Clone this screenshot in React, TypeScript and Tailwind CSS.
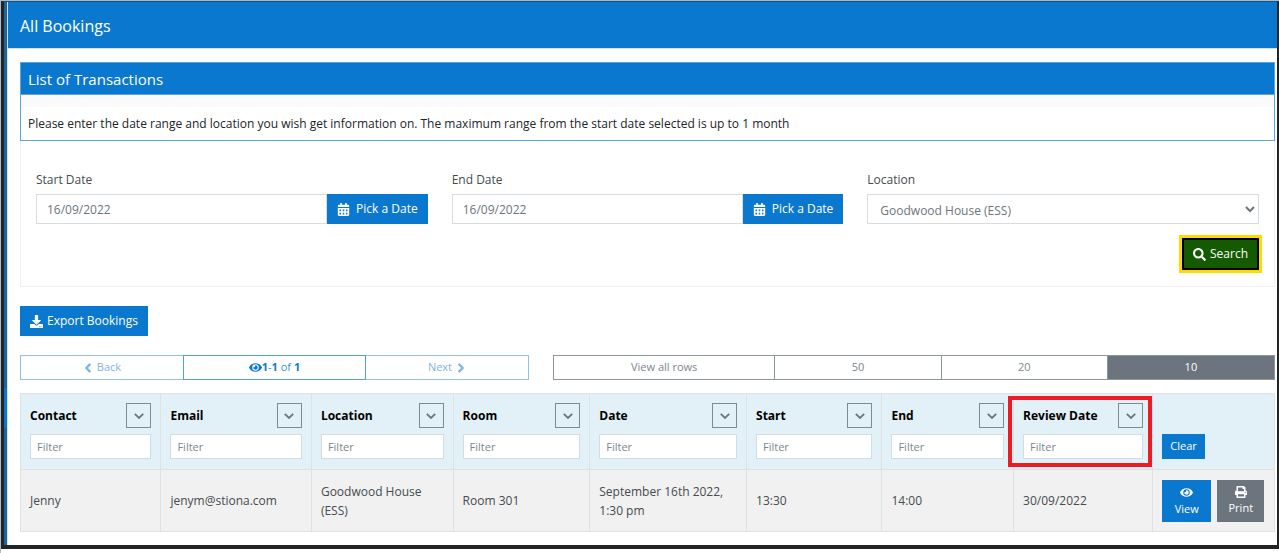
import { useState } from 'react';
import { FaCalendarAlt, FaChevronLeft, FaChevronRight, FaDownload, FaEye, FaPrint, FaSearch } from 'react-icons/fa';

const columns = [
    { key: 'contact', label: 'Contact', width: 'w-[11.2%]' },
    { key: 'email', label: 'Email', width: 'w-[12%]' },
    { key: 'location', label: 'Location', width: 'w-[11.3%]' },
    { key: 'room', label: 'Room', width: 'w-[10.9%]' },
    { key: 'date', label: 'Date', width: 'w-[12.5%]' },
    { key: 'start', label: 'Start', width: 'w-[10.8%]' },
    { key: 'end', label: 'End', width: 'w-[10.5%]' },
    { key: 'review', label: 'Review Date', width: 'w-[11.1%]' },
] as const;

const booking = {
    contact: 'Jenny',
    email: 'jenym@stiona.com',
    location: 'Goodwood House (ESS)',
    room: 'Room 301',
    date: 'September 16th 2022, 1:30 pm',
    start: '13:30',
    end: '14:00',
    review: '30/09/2022',
};

function DateField({ id, label }: { id: string; label: string }) {
    const [value, setValue] = useState('16/09/2022');

    return (
        <div>
            <label htmlFor={id} className="block text-xs leading-5">{label}</label>
            <div className="mt-1 flex h-[30px]">
                <input
                    id={id}
                    value={value}
                    onChange={(e) => setValue(e.target.value)}
                    className="min-w-0 flex-1 border border-[#d9dde2] px-2.5 pt-0.5 text-xs text-[#6c757d]"
                />
                <button className="flex items-center gap-1.5 bg-[#0b78d0] px-2.5 text-xs text-white">
                    <FaCalendarAlt className="h-[13px] w-auto" />
                    Pick a Date
                </button>
            </div>
        </div>
    );
}

function SortButton({ label }: { label: string }) {
    return (
        <button aria-label={`Sort by ${label}`} className="flex size-[25px] items-center justify-center border border-[#7f8b93] text-[#6c757d]">
            <svg viewBox="0 0 10 6" className="h-1.5 w-2.5" fill="none" stroke="currentColor" strokeWidth="1.8">
                <path d="M0.8 0.8 L5 5 L9.2 0.8" />
            </svg>
        </button>
    );
}

function BookingsTable() {
    return (
        <table className="mt-[13px] w-full table-fixed border-collapse text-left">
            <thead>
                <tr className="bg-[#e2f0f7]">
                    {columns.map((col) => (
                        <th key={col.key} className={`relative border border-[#dee2e6] px-[9px] pt-[9px] pb-2.5 text-xs font-bold text-black ${col.width}`}>
                            <div className="flex items-center justify-between">
                                {col.label}
                                <SortButton label={col.label} />
                            </div>
                            <input
                                aria-label={`Filter ${col.label}`}
                                placeholder="Filter"
                                className="mt-1.5 block h-[25px] w-full border border-[#d5dce1] bg-white px-1.5 text-[11px] font-normal placeholder:text-[#7d868e]"
                            />
                            {/* Highlight round the review date filter */}
                            {col.key === 'review' && (
                                <div className="pointer-events-none absolute -left-1.5 right-0 top-0.5 bottom-0.5 border-4 border-[#ed1c24]" />
                            )}
                        </th>
                    ))}
                    <th className="border border-[#dee2e6] px-[9px] pb-2.5 align-bottom">
                        <button className="block h-[25px] bg-[#0b78d0] px-2 text-[11px] font-normal text-white">Clear</button>
                    </th>
                </tr>
            </thead>
            <tbody>
                <tr className="bg-[#f1f1f1]">
                    {columns.map((col) => (
                        <td key={col.key} className="border border-[#dee2e6] px-[9px] text-xs leading-[19px]">
                            {booking[col.key]}
                        </td>
                    ))}
                    <td className="border border-[#dee2e6] px-[9px] pt-2.5 pb-[9px]">
                        <div className="flex gap-1.5 text-[11px] leading-4 text-white">
                            <button className="flex h-[42px] w-[49px] flex-col items-center justify-center gap-0.5 bg-[#0b78d0]">
                                <FaEye className="size-[13px]" />
                                View
                            </button>
                            <button className="flex h-[42px] w-[47px] flex-col items-center justify-center gap-0.5 bg-[#6c757d]">
                                <FaPrint className="size-3" />
                                Print
                            </button>
                        </div>
                    </td>
                </tr>
            </tbody>
        </table>
    );
}

function App() {
    return (
        <div className="border-l border-t border-[#a9bccb] bg-white pb-1 font-['Open_Sans','Noto_Sans',sans-serif] text-[#454b50]">
            <div className="flex border-x-[3px] border-t border-b-4 border-[#222426] border-t-[#1b4f78] border-r-2">
                <div className="flex w-[3px] shrink-0 flex-col bg-[#1f6496] pt-[386px]">
                    <div className="h-10 bg-[#0b78d0]" />
                </div>

                <main className="min-w-0 flex-1 border-l border-[#cfe3f4]">
                    <header className="border-b border-[#cfe3f4] bg-[#0b78d0] px-3 pt-3 pb-2.5">
                        <h1 className="text-base leading-6 text-white">All Bookings</h1>
                    </header>

                    <div className="pt-[13px] pr-0.5 pb-[13px] pl-3">
                        <section className="border border-[#f0f0f0]">
                            <div className="-m-px border border-[#5ba5de]">
                                <h2 className="border-b border-[#5ba5de] bg-[#0b78d0] px-[7px] pt-1 pb-[3px] text-[15px] leading-6 text-white">List of Transactions</h2>
                                <div className="h-3 bg-[#fafafa]" />
                                <p className="px-[7px] pt-[7px] pb-1.5 text-xs leading-5 text-[#212529]">
                                    Please enter the date range and location you wish get information on. The maximum range from the start date selected is up to 1 month
                                </p>
                            </div>

                            <div className="mt-[30px] grid grid-cols-3 gap-6 px-[15px]">
                                <DateField id="start-date" label="Start Date" />
                                <DateField id="end-date" label="End Date" />
                                <div>
                                    <label htmlFor="location" className="block text-xs leading-5">Location</label>
                                    <select id="location" className="mt-1 h-[30px] w-full border border-[#d9dde2] bg-white px-2 pt-0.5 text-xs text-[#6c757d]">
                                        <option>Goodwood House (ESS)</option>
                                    </select>
                                </div>
                            </div>

                            <div className="flex justify-end px-[15px] pt-3.5 pb-4">
                                <button className="flex h-8 items-center gap-1 border-2 border-black bg-[#145a00] px-[9px] text-xs text-white outline-3 outline-[#ffd900]">
                                    <FaSearch className="size-[13px]" />
                                    Search
                                </button>
                            </div>
                        </section>

                        <button className="mt-[19px] flex h-[30px] items-center gap-1 bg-[#0b78d0] px-2.5 text-xs text-white">
                            <FaDownload className="size-[13px]" />
                            Export Bookings
                        </button>

                        <div className="mt-[19px] grid grid-cols-12 gap-6 text-[11px]">
                            <div className="col-span-5 grid h-[25px] grid-cols-[8fr_9fr_8fr] text-[#7ab6e5]">
                                <button className="flex items-center justify-center gap-1 border border-r-0 border-[#8fc1ea]">
                                    <FaChevronLeft strokeWidth={50} className="h-2.5 w-auto" />
                                    Back
                                </button>
                                <div className="flex items-center justify-center border border-[#559fdc] text-[#3b8fd6]">
                                    <FaEye className="size-[13px] text-[#0b78d0]" />
                                    <span><b className="text-[#0b78d0]">1</b>-<b className="text-[#0b78d0]">1</b> of <b className="text-[#0b78d0]">1</b></span>
                                </div>
                                <button className="flex items-center justify-center gap-1 border border-l-0 border-[#8fc1ea]">
                                    Next
                                    <FaChevronRight strokeWidth={50} className="h-2.5 w-auto" />
                                </button>
                            </div>
                            <div className="col-span-7 grid h-[25px] grid-cols-[4fr_3fr_3fr_3fr] divide-x divide-[#8e969d] border border-[#8e969d] text-[#7d868e]">
                                <button>View all rows</button>
                                <button>50</button>
                                <button>20</button>
                                <button className="bg-[#6c757d] text-white">10</button>
                            </div>
                        </div>

                        <BookingsTable />
                    </div>
                </main>
            </div>
        </div>
    );
}

export default App;
